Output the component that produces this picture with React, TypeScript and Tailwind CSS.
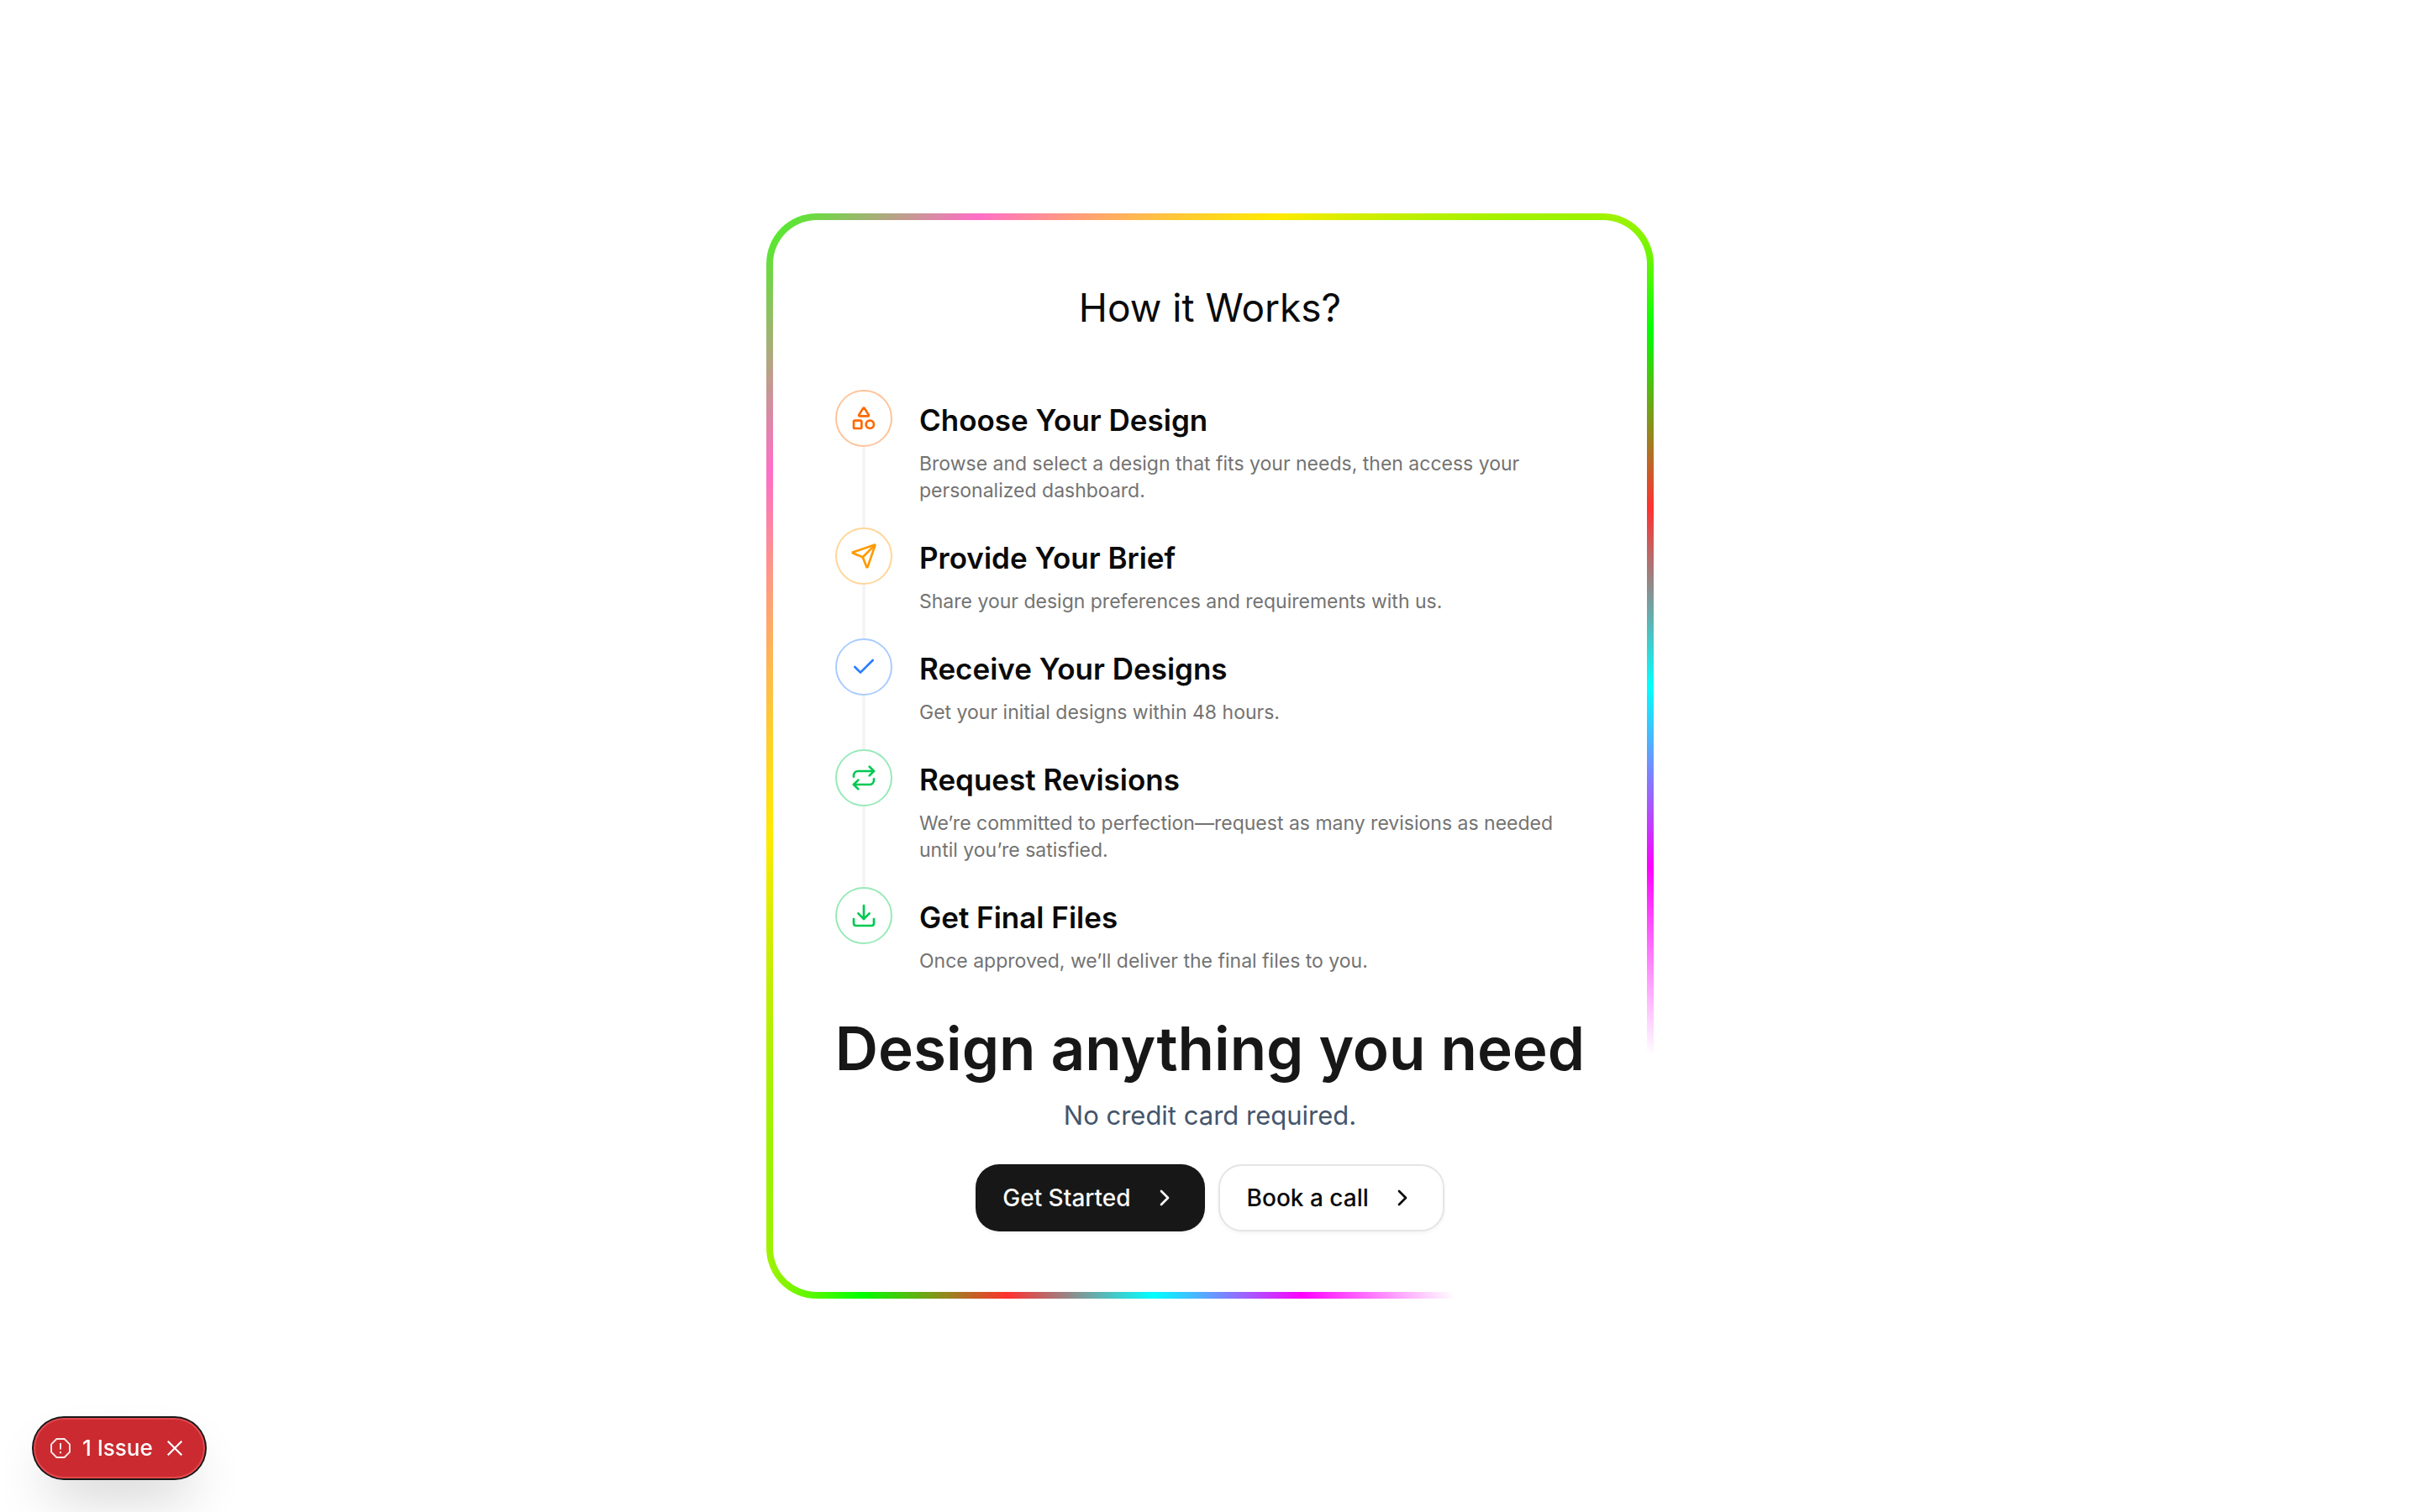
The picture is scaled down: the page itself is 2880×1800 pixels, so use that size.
import type { ReactNode } from "react";
import { Shapes, Send, Check, Repeat, Download, ChevronRight, type LucideIcon } from "lucide-react";

type Step = { title: string; text: string; icon: LucideIcon; tone: string };

const steps: Step[] = [
  {
    title: "Choose Your Design",
    text: "Browse and select a design that fits your needs, then access your personalized dashboard.",
    icon: Shapes,
    tone: "border-orange-500/40 text-orange-500",
  },
  {
    title: "Provide Your Brief",
    text: "Share your design preferences and requirements with us.",
    icon: Send,
    tone: "border-amber-500/40 text-amber-500",
  },
  {
    title: "Receive Your Designs",
    text: "Get your initial designs within 48 hours.",
    icon: Check,
    tone: "border-blue-500/40 text-blue-500",
  },
  {
    title: "Request Revisions",
    text: "We’re committed to perfection—request as many revisions as needed until you’re satisfied.",
    icon: Repeat,
    tone: "border-green-500/40 text-green-500",
  },
  {
    title: "Get Final Files",
    text: "Once approved, we’ll deliver the final files to you.",
    icon: Download,
    tone: "border-green-500/40 text-green-500",
  },
];

function StepRow({ step, last }: { step: Step; last: boolean }) {
  const Icon = step.icon;
  return (
    <li className="flex gap-8">
      <div className="flex flex-col items-center">
        <div className={`flex size-[68px] shrink-0 items-center justify-center rounded-full border-2 ${step.tone}`}>
          <Icon className="size-8" strokeWidth={2} />
        </div>
        {!last && <div className="w-1 grow bg-neutral-100" />}
      </div>
      <div className={last ? "pt-3" : "pt-3 pb-7"}>
        <h3 className="text-[35px] leading-[48px] font-semibold">{step.title}</h3>
        <p className="mt-3 text-[23px] leading-8 text-neutral-500">{step.text}</p>
      </div>
    </li>
  );
}

function ShineCard({ children }: { children: ReactNode }) {
  return (
    <section className="w-full max-w-[1056px] rounded-[60px] bg-[radial-gradient(transparent,transparent,#ff00ff,#00ffff,#ff3131,#00ff00,#ffea00,#ff6ec7,#39ff14,#7df9ff,#ff5f1f,#bc13fe,transparent,transparent)] bg-[length:300%_300%] bg-[position:29%_29%] p-2">
      <div className="rounded-[52px] bg-white">{children}</div>
    </section>
  );
}

function IssueBadge() {
  return (
    <div className="fixed bottom-10 left-10 flex h-[72px] items-center rounded-full border-2 border-[#e5484d] bg-[#ca2a30] pr-2 pl-[18px] text-white shadow-[0_0_0_2px_#171717,0_32px_64px_-16px_rgba(0,0,0,0.24)]">
      <button type="button" className="flex items-center gap-3.5 text-[26px] leading-8 font-medium">
        <svg viewBox="0 0 16 16" className="size-6 opacity-90" fill="none" stroke="currentColor" strokeWidth="1.3">
          <path d="M4.9 .7h6.2L15.3 4.9v6.2L11.1 15.3H4.9L.7 11.1V4.9Z" />
          <path d="M8 4v5" />
          <path d="M8 10.6v1.6" />
        </svg>
        1 Issue
      </button>
      <button type="button" aria-label="Close" className="flex h-12 w-[52px] items-center justify-center">
        <svg viewBox="0 0 18 18" className="size-[18px]" stroke="currentColor" strokeWidth="2.2">
          <path d="M.7 .7l16.6 16.6M17.3 .7L.7 17.3" />
        </svg>
      </button>
    </div>
  );
}

export default function App() {
  return (
    <main className="flex min-h-screen items-center justify-center bg-white p-8 font-[Inter,sans-serif] text-neutral-950">
      <ShineCard>
        <div className="flex flex-col items-center px-[74px] pt-[76px] pb-[72px]">
          <h1 className="text-[46px] leading-[56px]">How it Works?</h1>
          <ol className="mt-[70px] w-full">
            {steps.map((step, i) => (
              <StepRow key={step.title} step={step} last={i === steps.length - 1} />
            ))}
          </ol>
          <h2 className="mt-12 text-[71px] leading-[80px] font-semibold whitespace-nowrap text-neutral-900">
            Design anything you need
          </h2>
          <p className="mt-5 text-[31px] leading-10 text-slate-600">No credit card required.</p>
          <div className="mt-[38px] flex gap-4">
            <button
              type="button"
              className="flex h-20 items-center gap-6 rounded-[28px] bg-neutral-900 px-8 text-[28px] font-medium text-neutral-50 shadow-[0_2px_4px_rgba(0,0,0,0.05)]"
            >
              Get Started
              <ChevronRight className="size-8" />
            </button>
            <button
              type="button"
              className="flex h-20 items-center gap-6 rounded-[28px] border-2 border-neutral-200 bg-white px-8 text-[28px] font-medium shadow-[0_2px_4px_rgba(0,0,0,0.05)]"
            >
              Book a call
              <ChevronRight className="size-8" />
            </button>
          </div>
        </div>
      </ShineCard>
      <IssueBadge />
    </main>
  );
}
